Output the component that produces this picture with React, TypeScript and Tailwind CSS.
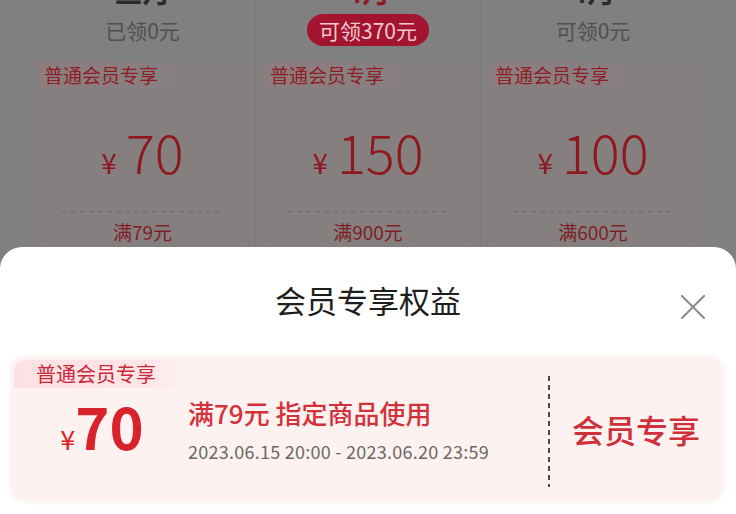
import React from 'react';

type Plan = {
  month: string;
  status: string;
  active: boolean;
  amount: string;
  threshold: string;
};

const plans: Plan[] = [
  { month: '三月', status: '已领0元', active: false, amount: '70', threshold: '满79元' },
  { month: '4月', status: '可领370元', active: true, amount: '150', threshold: '满900元' },
  { month: '4月', status: '可领0元', active: false, amount: '100', threshold: '满600元' },
];

function PlanColumn({ plan, first }: { plan: Plan; first: boolean }) {
  return (
    <div className={`w-[225px] px-[7px] flex flex-col ${first ? '' : 'border-l border-[#7a7a7a]'}`}>
      {/* month label, scrolled mostly off the top */}
      <div
        className={`-mt-[24px] h-[30px] text-center text-[28px] leading-[30px] font-bold ${
          plan.active ? 'text-[#8c1a22]' : 'text-[#2a2a2a]'
        }`}
      >
        {plan.month}
      </div>
      <div className="h-[32px] mt-[8px] flex items-center justify-center">
        {plan.active ? (
          <span className="h-[32px] px-[12px] rounded-full bg-[#a3142e] text-[#f0c8cf] text-[21px] leading-[32px]">
            {plan.status}
          </span>
        ) : (
          <span className="text-[#505050] text-[21px] leading-[32px]">{plan.status}</span>
        )}
      </div>
      <div className="mt-[16px] h-[200px] bg-[#857f7f]">
        <div className="h-[26px] w-[134px] bg-[linear-gradient(to_right,#8d7d7f,#877f80)] text-[#8e1d25] text-[19px] leading-[26px] pl-[7px]">
          普通会员专享
        </div>
        <div className="mt-[36px] h-[54px] flex items-baseline justify-center gap-[9px] text-[#8f181f]">
          <span className="text-[28px]">¥</span>
          <span className="text-[54px] leading-[54px] font-light">{plan.amount}</span>
        </div>
        <div className="mt-[33px] mx-[25px] h-[1px] bg-[repeating-linear-gradient(to_right,#6b6b6b_0_5px,transparent_5px_9px)]" />
        <div className="mt-[10px] text-center text-[19px] leading-[20px] text-[#7e1f25]">{plan.threshold}</div>
      </div>
    </div>
  );
}

function CloseIcon() {
  return (
    <svg width="26" height="26" viewBox="0 0 26 26" fill="none" stroke="#8c8c8c" strokeWidth="2.2" strokeLinecap="round">
      <path d="M2 2 L24 24" />
      <path d="M24 2 L2 24" />
    </svg>
  );
}

export default function App() {
  return (
    <div className="relative w-[736px] h-[514px] overflow-hidden bg-[#808080] font-['Noto_Sans_CJK_SC','Noto_Sans',sans-serif]">
      <div className="flex px-[30px]">
        {plans.map((p, i) => (
          <PlanColumn key={i} plan={p} first={i === 0} />
        ))}
      </div>

      {/* bottom sheet */}
      <div className="absolute left-0 right-0 top-[247px] bottom-0 bg-white rounded-t-[22px]">
        <div className="pt-[33px] text-center text-[31px] leading-[40px] text-[#1e1e1e]">会员专享权益</div>
        <button className="absolute right-[30px] top-[47px]">
          <CloseIcon />
        </button>

        <div className="mt-[38px] ml-[12px] w-[710px] h-[142px] rounded-[12px] bg-[#fef2f0] shadow-[0_0_6px_rgba(245,215,212,0.6)] flex">
          <div className="w-[176px] flex flex-col">
            <div className="mt-[2px] ml-[2px] h-[28px] w-[164px] rounded-tl-[12px] bg-[linear-gradient(to_right,#fde0e3,#fde6e7_80%,#feefee)] text-center text-[20px] leading-[28px] text-[#c9283b]">
              普通会员专享
            </div>
            <div className="mt-[8px] pl-[4px] flex items-baseline justify-center text-[#d8232a]">
              <span className="text-[27px]">¥</span>
              <span className="text-[58px] leading-[58px] font-bold">70</span>
            </div>
          </div>

          <div className="flex-1 pt-[40px]">
            <div className="text-[26px] leading-[30px] font-medium text-[#d2333b]">满79元 指定商品使用</div>
            <div className="mt-[12px] text-[18px] leading-[22px] tracking-[0.25px] text-[#6a6a6a]">2023.06.15 20:00 - 2023.06.20 23:59</div>
          </div>

          <div className="my-[18px] w-[2px] mb-[13px] bg-[repeating-linear-gradient(to_bottom,#4a4a4a_0_5px,transparent_5px_9px)]" />

          <div className="w-[172px] flex items-center justify-center text-[32px] font-medium text-[#d03039]">
            会员专享
          </div>
        </div>
      </div>
    </div>
  );
}
